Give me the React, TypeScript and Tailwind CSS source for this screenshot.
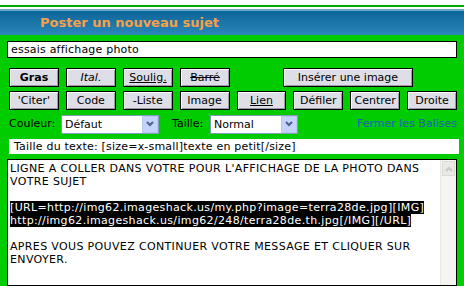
import React from "react";

const Btn = ({ children, w = "w-[50px]", cls = "" }: { children: React.ReactNode; w?: string; cls?: string }) => (
  <div
    className={`${w} h-[19px] border border-black bg-[#dedee6] shadow-[inset_1px_1px_0_#ffffff,inset_-1px_-1px_0_#9a9aa8] flex items-center justify-center text-[11px] leading-none text-black ${cls}`}
  >
    {children}
  </div>
);

const Select = ({ label, w }: { label: string; w: string }) => (
  <div className={`${w} h-[19px] bg-white border border-[#7f9db9] flex items-center`}>
    <span className="flex-1 pl-[3px] text-[11px] leading-none">{label}</span>
    <div className="w-[16px] h-[17px] bg-[#c3d3fd] border border-[#b9c9ef] flex items-center justify-center">
      <svg width="8" height="6" viewBox="0 0 8 6">
        <path d="M1 1 L4 4 L7 1" stroke="#4d6185" strokeWidth="2" fill="none" />
      </svg>
    </div>
  </div>
);

export default function App() {
  return (
    <div className="w-[464px] h-[286px] overflow-hidden bg-white" style={{ fontFamily: '"DejaVu Sans", Verdana, sans-serif' }}>
      <div className="h-[5px] bg-white" />
      <div className="h-[2px] bg-[#00aa00]" />
      <div className="h-[2px] bg-white" />
      <div className="h-[2px] bg-[#6aa6cc]" />
      <div className="h-[24px] bg-gradient-to-b from-[#0a6598] to-[#2a87b9] flex items-center pl-[40px]">
        <span className="text-[13px] font-bold text-[#f6a04a]">Poster un nouveau sujet</span>
      </div>
      <div className="bg-[#00cc00] h-[251px] pl-[7px] pr-[7px] pt-[6px] flex flex-col">
        <div className="h-[17px] border border-black bg-white flex items-center pl-[3px] text-[11px] leading-none w-[450px] tracking-[0.2px]">
          essais affichage photo
        </div>
        <div className="mt-[10px] pl-[2px] flex gap-[7px]">
          <Btn cls="font-bold">Gras</Btn>
          <Btn cls="italic">Ital.</Btn>
          <Btn cls="underline">Soulig.</Btn>
          <Btn cls="line-through">Barré</Btn>
          <Btn w="w-[130px] ml-[46px]">Insérer une image</Btn>
        </div>
        <div className="mt-[4px] pl-[2px] flex gap-[7px]">
          <Btn>'Citer'</Btn>
          <Btn>Code</Btn>
          <Btn>-Liste</Btn>
          <Btn>Image</Btn>
          <Btn cls="underline">Lien</Btn>
          <Btn>Défiler</Btn>
          <Btn>Centrer</Btn>
          <Btn>Droite</Btn>
        </div>
        <div className="mt-[4px] pl-[2px] flex items-center h-[20px] text-[11px]">
          <span className="w-[52px]">Couleur:</span>
          <Select label="Défaut" w="w-[98px]" />
          <span className="ml-[13px] w-[38px]">Taille:</span>
          <Select label="Normal" w="w-[88px]" />
          <span className="ml-auto text-[#1f5fbf]">Fermer les Balises</span>
        </div>
        <div className="mt-[5px] ml-[2px] h-[15px] bg-white flex items-center pl-[5px] text-[11px] leading-none w-[450px] tracking-[0.2px]">
          Taille du texte: [size=x-small]texte en petit[/size]
        </div>
        <div className="mt-[5px] flex-1 border border-black bg-white flex w-[450px]">
          <div className="flex-1 pl-[2px] pt-[2px] text-[11px] leading-[13px] text-black whitespace-pre tracking-[0.35px]">
            {"LIGNE A COLLER DANS VOTRE POUR L'AFFICHAGE DE LA PHOTO DANS\nVOTRE SUJET\n\n"}
            <span className="bg-black text-white">{"[URL=http://img62.imageshack.us/my.php?image=terra28de.jpg][IMG]"}</span>
            {"\n"}
            <span className="bg-black text-white">{"http://img62.imageshack.us/img62/248/terra28de.th.jpg[/IMG][/URL]"}</span>
            {"\n\nAPRES VOUS POUVEZ CONTINUER VOTRE MESSAGE ET CLIQUER SUR\nENVOYER."}
          </div>
          <div className="w-[16px] bg-[#f4f4f0] border-l border-[#e8e8e4] flex flex-col">
            <div className="m-[1px] h-[15px] bg-[#eaeae4] border border-[#dcdcd4] flex items-center justify-center">
              <svg width="8" height="6" viewBox="0 0 8 6">
                <path d="M1 5 L4 2 L7 5" stroke="#c8c8c0" strokeWidth="2" fill="none" />
              </svg>
            </div>
          </div>
        </div>
      </div>
    </div>
  );
}
